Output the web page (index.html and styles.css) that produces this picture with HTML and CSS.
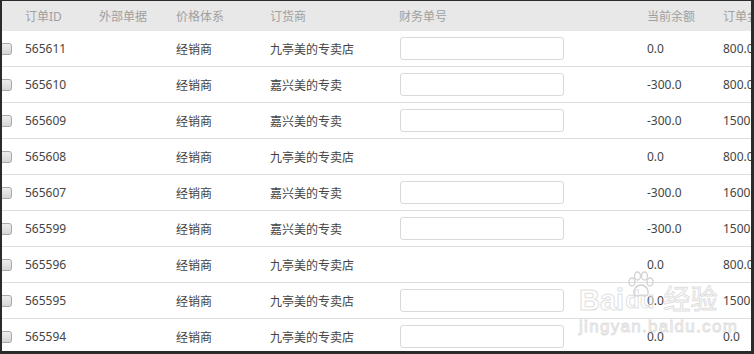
FILE: index.html
```html
<!DOCTYPE html>
<html>
<head>
<meta charset="utf-8">
<link rel="stylesheet" href="styles.css">
</head>
<body>
<div class="frame">
  <table class="grid">
    <colgroup>
      <col class="c-chk"><col class="c-id"><col class="c-ext"><col class="c-price"><col class="c-dealer"><col class="c-fin"><col class="c-bal"><col class="c-amt">
    </colgroup>
    <thead>
      <tr><th></th><th>订单ID</th><th>外部单据</th><th>价格体系</th><th>订货商</th><th>财务单号</th><th>当前余额</th><th>订单金额</th></tr>
    </thead>
    <tbody>
      <tr><td><span class="chk"></span></td><td>565611</td><td></td><td>经销商</td><td>九亭美的专卖店</td><td><span class="inp"></span></td><td>0.0</td><td>800.00</td></tr>
      <tr><td><span class="chk"></span></td><td>565610</td><td></td><td>经销商</td><td>嘉兴美的专卖</td><td><span class="inp"></span></td><td>-300.0</td><td>800.00</td></tr>
      <tr><td><span class="chk"></span></td><td>565609</td><td></td><td>经销商</td><td>嘉兴美的专卖</td><td><span class="inp"></span></td><td>-300.0</td><td>1500.00</td></tr>
      <tr><td><span class="chk"></span></td><td>565608</td><td></td><td>经销商</td><td>九亭美的专卖店</td><td></td><td>0.0</td><td>800.00</td></tr>
      <tr><td><span class="chk"></span></td><td>565607</td><td></td><td>经销商</td><td>嘉兴美的专卖</td><td><span class="inp"></span></td><td>-300.0</td><td>1600.00</td></tr>
      <tr><td><span class="chk"></span></td><td>565599</td><td></td><td>经销商</td><td>嘉兴美的专卖</td><td><span class="inp"></span></td><td>-300.0</td><td>1500.00</td></tr>
      <tr><td><span class="chk"></span></td><td>565596</td><td></td><td>经销商</td><td>九亭美的专卖店</td><td></td><td>0.0</td><td>800.00</td></tr>
      <tr><td><span class="chk"></span></td><td>565595</td><td></td><td>经销商</td><td>九亭美的专卖店</td><td><span class="inp"></span></td><td>0.0</td><td>1500.00</td></tr>
      <tr><td><span class="chk"></span></td><td>565594</td><td></td><td>经销商</td><td>九亭美的专卖店</td><td><span class="inp"></span></td><td>0.0</td><td>0.0</td></tr>
    </tbody>
  </table>
  <div class="wm">
    <svg class="wm-paw" width="30" height="28" viewBox="0 0 30 28">
      <g fill="none" stroke="#d2d2d2" stroke-width="1.3">
        <ellipse cx="6" cy="11" rx="3" ry="4"/>
        <ellipse cx="11.5" cy="5" rx="3" ry="4"/>
        <ellipse cx="18.5" cy="5" rx="3" ry="4"/>
        <ellipse cx="24" cy="11" rx="3" ry="4"/>
        <path d="M15 14 C10 14 7 19 8 23 C9 26 13 25 15 24 C17 25 21 26 22 23 C23 19 20 14 15 14 Z"/>
      </g>
    </svg>
    <div class="wm-top"><span class="wm-bai">Bai</span><span class="wm-du">du</span><span class="wm-jy">经验</span></div>
    <div class="wm-url">jingyan.baidu.com</div>
  </div>
</div>
</body>
</html>
```

FILE: styles.css
```css
html, body {
  margin: 0;
  padding: 0;
  background: #fff;
}
.frame {
  position: relative;
  box-sizing: border-box;
  width: 754px;
  height: 354px;
  border-top: 1px solid #2b2b2b;
  border-left: 2px solid #2b2b2b;
  border-right: 3px solid #2b2b2b;
  border-bottom: 3px solid #2b2b2b;
  overflow: hidden;
  font-family: "Noto Sans", "Noto Sans CJK SC", sans-serif;
  font-size: 12px;
  color: #444;
}
.grid {
  border-collapse: collapse;
  table-layout: fixed;
  width: 821px;
  white-space: nowrap;
}
.c-chk { width: 23px; }
.c-id { width: 74px; }
.c-ext { width: 77px; }
.c-price { width: 94px; }
.c-dealer { width: 129px; }
.c-fin { width: 248px; }
.c-bal { width: 76px; }
.c-amt { width: 100px; }
.grid th {
  height: 30px;
  padding: 0;
  background: #e8e8e8;
  color: #a0a0a0;
  font-weight: normal;
  text-align: left;
  vertical-align: middle;
  overflow: hidden;
}
.grid td {
  height: 35px;
  padding: 0;
  border-bottom: 1px solid #dedede;
  vertical-align: middle;
  overflow: hidden;
}
.chk {
  display: block;
  box-sizing: border-box;
  width: 13px;
  height: 12px;
  margin-left: -3px;
  border: 1px solid #a9a9a9;
  border-radius: 3px;
  background: linear-gradient(#ededed, #d6d6d6);
}
.inp {
  display: block;
  box-sizing: border-box;
  width: 164px;
  height: 23px;
  margin-left: 1px;
  border: 1px solid #d9d9d9;
  border-radius: 3px;
  background: #fff;
}
.wm {
  position: absolute;
  left: 577px;
  top: 270px;
  width: 140px;
  pointer-events: none;
  font-family: "Liberation Sans", "Noto Sans CJK SC", sans-serif;
  color: rgba(255, 255, 255, 0.55);
  -webkit-text-stroke: 1px rgba(205, 205, 205, 0.65);
}
.wm-paw {
  position: absolute;
  left: 47px;
  top: 0;
}
.wm-top {
  display: flex;
  align-items: flex-end;
  height: 44px;
}
.wm-bai, .wm-du {
  font-size: 29px;
  line-height: 30px;
  font-weight: bold;
}
.wm-du {
  margin-left: 1px;
  font-size: 24px;
}
.wm-jy {
  font-size: 27px;
  line-height: 30px;
  margin-left: 9px;
}
.wm-url {
  font-size: 17px;
  line-height: 20px;
  margin-top: 2px;
  letter-spacing: 1.3px;
}
```
